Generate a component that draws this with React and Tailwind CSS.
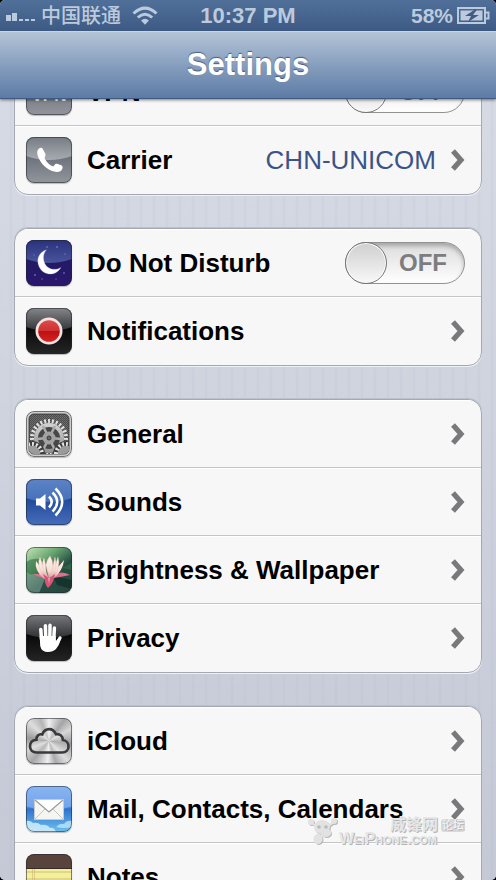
import React from "react";

const font = "font-['Liberation_Sans','Noto_Sans_CJK_SC',sans-serif]";

function Gloss({ id, top, bottom, topEnd, bottomEnd }) {
  return (
    <>
      <defs>
        <linearGradient id={id + "-a"} x1="0" y1="0" x2="0" y2="1">
          <stop offset="0" stopColor={top} />
          <stop offset="1" stopColor={topEnd} />
        </linearGradient>
        <linearGradient id={id + "-b"} x1="0" y1="0" x2="0" y2="1">
          <stop offset="0.4" stopColor={bottom} />
          <stop offset="1" stopColor={bottomEnd} />
        </linearGradient>
      </defs>
      <rect width="46" height="46" fill={`url(#${id}-b)`} />
      <path d="M0 0H46V19Q23 27 0 19Z" fill={`url(#${id}-a)`} />
    </>
  );
}

function Tile({ children, className = "" }) {
  return (
    <span className={`relative block size-[46px] shrink-0 overflow-hidden rounded-lg shadow-[0_1px_1px_rgba(0,0,0,0.25)] ${className}`}>
      <svg viewBox="0 0 46 46" className="block size-full" aria-hidden="true">
        {children}
        <rect x="0.5" y="0.5" width="45" height="45" rx="7.5" fill="none" stroke="#20242c" strokeOpacity="0.55" />
      </svg>
    </span>
  );
}

function VpnIcon() {
  return (
    <Tile>
      <Gloss id="vpn" top="#b4b7bc" topEnd="#898d94" bottom="#70757e" bottomEnd="#92959a" />
      <text x="23" y="32" textAnchor="middle" fontSize="17" fontWeight="bold" fill="#fff">VPN</text>
    </Tile>
  );
}

function PhoneIcon() {
  return (
    <Tile>
      <Gloss id="phone" top="#777c84" topEnd="#a7abb1" bottom="#6a707a" bottomEnd="#92969d" />
      <path d="M13 11.5C11 13 10.6 16 12.2 20C15 27 21 32.5 28 34.6C32 35.5 35.5 34.8 36.5 31.2C36.8 29.8 36.5 29 35.2 28.3L31 26.8C30 26.5 29.3 26.8 28.7 27.7L27.3 29.6C23.5 28 20.2 24.8 18.5 21.2L19.2 19.2C19.8 18.2 19.7 17.5 19.2 16.5L17.1 12.4C16.2 10.6 14.8 10.2 13 11.5Z" fill="#fff" />
    </Tile>
  );
}

function MoonIcon() {
  return (
    <Tile>
      <Gloss id="moon" top="#29317b" topEnd="#49559c" bottom="#211b63" bottomEnd="#2b176e" />
      <g fill="#8c96d3" opacity="0.6">
        <circle cx="21" cy="7" r="0.9" /><circle cx="31" cy="7" r="1" /><circle cx="39" cy="14" r="0.8" />
        <circle cx="8" cy="15" r="0.7" /><circle cx="9" cy="35" r="1" /><circle cx="16" cy="39" r="0.8" />
        <circle cx="38" cy="33" r="0.9" /><circle cx="30" cy="39" r="0.7" />
      </g>
      <path d="M20.5 9.8C12.5 12.5 9.8 20 13.2 27C17.4 35.6 29.5 37 35 27.5C28.6 31.2 21.5 29 18.8 23.4C16.6 18.7 17.2 13.5 20.5 9.8Z" fill="#fff" stroke="#a8aee0" strokeOpacity="0.5" strokeWidth="0.6" />
    </Tile>
  );
}

function NotificationsIcon() {
  return (
    <Tile>
      <Gloss id="notif" top="#85878a" topEnd="#303235" bottom="#080808" bottomEnd="#252525" />
      <defs>
        <linearGradient id="red" x1="0" y1="0" x2="0" y2="1">
          <stop offset="0" stopColor="#df4b4b" /><stop offset="0.5" stopColor="#ce3030" />
          <stop offset="0.52" stopColor="#bd1114" /><stop offset="1" stopColor="#d42222" />
        </linearGradient>
      </defs>
      <circle cx="23" cy="23" r="13.5" fill="#f5e3e3" />
      <circle cx="23" cy="23" r="10.8" fill="url(#red)" />
    </Tile>
  );
}

function Gear({ x, y, r, teeth, band }) {
  return (
    <g transform={`translate(${x} ${y})`} fill="none">
      <circle r={r} strokeWidth="4" pathLength={teeth * 2} strokeDasharray="1 1" stroke="#e2e2e2" />
      <circle r={r - 2 - band / 2} strokeWidth={band} stroke="url(#steel)" />
    </g>
  );
}

function GeneralIcon() {
  return (
    <Tile>
      <defs>
        <pattern id="mesh" width="2" height="2" patternUnits="userSpaceOnUse">
          <rect width="2" height="2" fill="#4c4c4c" /><rect width="1" height="1" fill="#727272" /><rect x="1" y="1" width="1" height="1" fill="#686868" />
        </pattern>
        <linearGradient id="steel" gradientUnits="userSpaceOnUse" x1="0" y1="-18" x2="0" y2="18">
          <stop offset="0" stopColor="#dadada" /><stop offset="1" stopColor="#8a8a8a" />
        </linearGradient>
        <clipPath id="gearbox"><rect x="3" y="3" width="40" height="40" rx="5" /></clipPath>
      </defs>
      <rect width="46" height="46" fill="#cccccc" />
      <rect x="3" y="3" width="40" height="40" rx="5" fill="url(#mesh)" stroke="#333" strokeWidth="0.8" />
      <g clipPath="url(#gearbox)">
        <circle cx="23" cy="27" r="13" fill="#474747" />
        <Gear x={23} y={27} r={17} teeth={27} band={4} />
        <g stroke="#aaaaaa" strokeWidth="2.6">
          <path d="M23 27L17 15M23 27L29 15M23 27L10 28M23 27L36 28M23 27L17 39M23 27L29 39" />
        </g>
        <circle cx="23" cy="27" r="6.5" fill="#a2a2a2" />
        <circle cx="23" cy="27" r="2" fill="#666" stroke="#3a3a3a" />
        <circle cx="6" cy="43" r="13" fill="#3e3e3e" /><circle cx="40" cy="43" r="13" fill="#3e3e3e" />
        <Gear x={6} y={43} r={10} teeth={16} band={4} />
        <Gear x={40} y={43} r={10} teeth={16} band={4} />
        <circle cx="6" cy="43" r="8" fill="#9b9b9b" /><circle cx="40" cy="43" r="8" fill="#9b9b9b" />
      </g>
    </Tile>
  );
}

function SoundsIcon() {
  return (
    <Tile>
      <Gloss id="sound" top="#5d83c5" topEnd="#4570ba" bottom="#1f489a" bottomEnd="#466db9" />
      <path d="M10 19.5H14L19.5 15V31L14 26.5H10Z" fill="#fff" />
      <g fill="none" stroke="#fff" strokeWidth="2.5">
        <path d="M23 17.5Q28.5 23 23 28.5" />
        <path d="M26.5 13.5Q36 23 26.5 32.5" />
        <path d="M29.5 9.5Q43 23 29.5 36.5" />
      </g>
    </Tile>
  );
}

function LotusIcon() {
  return (
    <Tile>
      <defs>
        <linearGradient id="pond" x1="0" y1="0" x2="0.8" y2="1">
          <stop offset="0" stopColor="#c6e6bb" /><stop offset="0.35" stopColor="#6ca872" />
          <stop offset="0.65" stopColor="#254f43" /><stop offset="1" stopColor="#28463f" />
        </linearGradient>
        <linearGradient id="petal" x1="0" y1="0" x2="0" y2="1">
          <stop offset="0" stopColor="#fff6ec" /><stop offset="0.65" stopColor="#f7ddd4" /><stop offset="1" stopColor="#e08a9b" />
        </linearGradient>
      </defs>
      <rect width="46" height="46" fill="url(#pond)" />
      <path d="M0 15Q10 8 24 16T46 15V23Q30 18 20 25T0 25Z" fill="#347244" opacity="0.6" />
      <path d="M0 29Q9 24 19 32L13 46H0Z" fill="#78968d" opacity="0.65" />
      <path d="M27 29L46 33V42L31 38Z" fill="#132e29" opacity="0.8" />
      <path d="M19 27L7 27Q12 30 20 31ZM27 28Q36 23 44 28Q35 30 27 31Z" fill="#db718b" />
      <path d="M22 30L10 14Q8 23 18 32ZM24 30L38 13Q37 24 27 32Z" fill="url(#petal)" />
      <path d="M21 31L14 10Q10 18 18 31ZM25 31L32 10Q35 19 28 31Z" fill="url(#petal)" stroke="#eab9b6" strokeWidth="0.4" />
      <path d="M23 31L18 11Q14 18 20 31ZM24 31L29 10Q32 20 26 31ZM23 32Q16 19 24 9Q30 19 25 32Z" fill="url(#petal)" stroke="#e6bdb6" strokeWidth="0.4" />
      <path d="M17 27L23 31L29 27Q28 36 22 41Q18 36 19 32Z" fill="#d95577" />
      <path d="M22 31L24 31L23 37Z" fill="#ef9cae" />
    </Tile>
  );
}

function HandIcon() {
  return (
    <Tile>
      <Gloss id="hand" top="#77797c" topEnd="#2d2f32" bottom="#070707" bottomEnd="#242424" />
      <g fill="none" stroke="#fff" strokeLinecap="round">
        <path d="M14.8 14.5L15.5 24M19.4 10.8L19.8 24M24 10.2L23.8 24M28.4 13L27.8 24" strokeWidth="3.5" />
        <path d="M34 23L30.5 29" strokeWidth="3.4" />
      </g>
      <path d="M13.7 21H29.6L30 26L32.2 23.5L34.5 25.5Q32.8 31 30 34Q27 37 22 37Q15.5 37 14.2 31Z" fill="#fff" />
    </Tile>
  );
}

function CloudIcon() {
  return (
    <Tile className="bg-[conic-gradient(#eee,#a5a5a5_10%,#d8d8d8_17%,#999_27%,#ddd_38%,#aaa_45%,#eee_51%,#a6a6a6_61%,#d8d8d8_69%,#999_77%,#ddd_87%,#b4b4b4_94%,#eee)]">
      <path d="M10.5 34.5H36C40 34.5 42.5 32 42.5 28.5C42.5 25 40 22.3 36.8 22C36.8 18 33.5 15.5 30 16.3C28 12.2 24.7 10.5 21 11.5C18.5 12.2 17 14 16.3 16.5C12.7 15.5 10 18.5 10.4 21.8C6.5 22.2 4 24.7 4 28.3C4 32 6.5 34.5 10.5 34.5Z" fill="#fff" fillOpacity="0.2" stroke="#383a3d" strokeWidth="2.6" />
    </Tile>
  );
}

function MailIcon() {
  return (
    <Tile>
      <defs>
        <linearGradient id="sky" x1="0" y1="0" x2="0" y2="1">
          <stop offset="0" stopColor="#7fb0f0" /><stop offset="0.45" stopColor="#5a91df" />
          <stop offset="0.5" stopColor="#2e72cd" /><stop offset="1" stopColor="#6cc2ef" />
        </linearGradient>
      </defs>
      <rect width="46" height="46" fill="url(#sky)" />
      <path d="M0 0H46V20Q23 29 0 20Z" fill="#8fbaf3" opacity="0.5" />
      <path d="M0 35Q4 34 7 37Q12 36 15 39Q21 38 24 42Q28 41 30 46H0Z" fill="#d9f1fb" opacity="0.8" />
      <path d="M30 41Q34 37 38 38Q41 34 46 35V41Q38 43 30 41Z" fill="#d9f1fb" opacity="0.65" />
      <rect x="8.5" y="13.5" width="29" height="20" fill="#f5f5f2" stroke="#c7cbd0" />
      <path d="M9 33L19 23M37 33L27 23" stroke="#b9bbbb" strokeWidth="0.8" />
      <path d="M9 14L23 26L37 14" fill="#fff" stroke="#999b9c" strokeWidth="1.2" />
    </Tile>
  );
}

function NotesIcon() {
  return (
    <Tile>
      <rect width="46" height="46" fill="#f5ee9a" />
      <rect width="46" height="14" fill="#59443d" />
      <path d="M0 14.5H46" stroke="#372a27" />
      <path d="M0 18H46M0 25H46M0 32H46M0 39H46" stroke="#c7c37b" />
      <path d="M6.5 15V46M8.5 15V46" stroke="#cdb670" strokeWidth="0.6" />
    </Tile>
  );
}

function Chevron() {
  return (
    <svg viewBox="0 0 14 22" className="h-[22px] w-[14px] shrink-0" aria-hidden="true">
      <path d="M2 2L10 11L2 20" fill="none" stroke="#79797b" strokeWidth="5.2" />
    </svg>
  );
}

const rowStyle = "flex h-[68px] items-center gap-[15px] border-b border-[#c4c5c8] pl-[11px] pr-4 text-[26px] leading-8 font-bold text-black shadow-[inset_0_1px_0_#fff] last:border-b-0";

function LinkRow({ icon, label, value }) {
  return (
    <a href="#" className={rowStyle}>
      {icon}
      <span className="flex-1 whitespace-nowrap">{label}</span>
      {value && <span className="font-normal text-[#3b5487]">{value}</span>}
      <Chevron />
    </a>
  );
}

function SwitchRow({ icon, label }) {
  return (
    <label className={rowStyle}>
      {icon}
      <span className="flex-1">{label}</span>
      <span className="relative flex h-[42px] w-[120px] shrink-0 items-center justify-end rounded-full border border-[#929295] bg-linear-to-b from-[#dcdcdc] to-white pr-[17px] shadow-[inset_0_3px_4px_rgba(0,0,0,0.25)]">
        <input type="checkbox" role="switch" className="absolute -top-px -left-px size-[42px] appearance-none rounded-full border border-[#77777a] bg-linear-to-b from-[#cfcfcf] to-[#f8f8f8] shadow-[inset_0_0_0_1px_#fafafa]" />
        <span className="text-2xl text-[#7d7d7f]">OFF</span>
      </span>
    </label>
  );
}

function Group({ children }) {
  return (
    <section className="overflow-hidden rounded-[14px] border border-[#a4a8b1] bg-[#f7f7f7] shadow-[0_1px_0_#edf0f5,0_-1px_0_#bcc1cb]">
      {children}
    </section>
  );
}

function StatusBar() {
  return (
    <div className="grid h-[31px] grid-cols-[1fr_auto_1fr] items-center bg-linear-to-b from-[#50709a] to-[#3d5a83] px-[6px] text-[#bccadd]">
      <div className="flex items-center">
        <svg viewBox="0 0 30 12" className="h-3 w-[30px]" fill="#bccadd" aria-hidden="true">
          <path d="M0 5H5V11H0ZM6 3H11V11H6ZM13 9H17V11H13ZM19 9H23V11H19ZM25 9H29V11H25Z" />
        </svg>
        <span className="ml-[5px] text-xl leading-7 font-medium">中国联通</span>
        <svg viewBox="0 0 26 20" className="ml-[11px] h-5 w-[26px]" fill="none" stroke="#bccadd" strokeWidth="3" aria-hidden="true">
          <path d="M1.5 7.5Q13 -3.2 24.5 7.5M5.8 11.5Q13 5 20.2 11.5" />
          <path d="M9 14.5Q13 11 17 14.5L13 18.8Z" fill="#bccadd" stroke="none" />
        </svg>
      </div>
      <span className="text-[22px] leading-7 font-bold">10:37 PM</span>
      <div className="flex items-center justify-end gap-1">
        <span className="text-[21px] leading-7 font-bold">58%</span>
        <svg viewBox="0 0 33 17" className="h-[17px] w-[33px]" aria-hidden="true">
          <path d="M1 1H28V16H1ZM28 5.5H31.5V11.5H28" fill="none" stroke="#bccadd" strokeWidth="2" />
          <rect x="3.5" y="3.5" width="22" height="10" fill="#bccadd" />
          <path d="M18 2.5L8 9H14L11 15L22 8H16L20 2.5Z" fill="#405c84" />
        </svg>
      </div>
    </div>
  );
}

function Watermark() {
  return (
    <div className="pointer-events-none absolute right-[31px] bottom-[34px] flex items-end text-[#e6e6e7] [text-shadow:1px_1px_0_#b4b4b6]" aria-hidden="true">
      <svg viewBox="0 0 32 28" className="h-7 w-8 drop-shadow-[1px_1px_0_#b8b8ba]">
        <g fill="#e2e2e3">
          <ellipse cx="15" cy="9" rx="8" ry="7" /><circle cx="4" cy="4" r="3" /><circle cx="27" cy="3" r="3" />
          <ellipse cx="11" cy="21" rx="4.5" ry="5" /><path d="M5 5L12 10M27 4L20 9" stroke="#e2e2e3" strokeWidth="2" />
          <ellipse cx="19" cy="15" rx="5" ry="4" />
        </g>
        <circle cx="12" cy="9" r="1.8" fill="#bbb" /><circle cx="19" cy="9" r="1.8" fill="#bbb" />
      </svg>
      <div className="flex flex-col items-end">
        <div className="flex items-center gap-[3px] leading-[14px]">
          <span className="text-base leading-[14px] font-bold">威锋网</span>
          <span className="rounded-[3px] bg-[#d8d8da] px-px text-[11px] leading-[13px] text-[#f6f6f6]">论坛</span>
        </div>
        <span className="mr-7 text-base leading-[14px] font-bold [font-variant:small-caps]">WeiPhone.com</span>
      </div>
    </div>
  );
}

export default function App() {
  return (
    <div className={`h-screen overflow-hidden bg-black ${font}`}>
      <div className="relative flex h-full flex-col overflow-hidden rounded-[5px] bg-[#d0d4df]">
        <header className="relative z-10 shrink-0 shadow-[0_1px_3px_rgba(0,0,0,0.5)]">
          <StatusBar />
          <div className="flex h-[68px] items-center justify-center border-t border-b border-t-[#c8d5e4] border-b-[#405b83] bg-linear-to-b from-[#b4c4d7] to-[#5c7ba5]">
            <h1 className="text-[31px] leading-9 font-bold text-white [text-shadow:0_-1px_1px_rgba(30,50,80,0.65)]">Settings</h1>
          </div>
        </header>
        <main className="min-h-0 flex-1 overflow-hidden bg-linear-to-b from-[#d6dae4] to-[#c5c9d6]">
          <div className="-mt-[42px] flex flex-col gap-[33px] bg-[repeating-linear-gradient(90deg,transparent_0px,transparent_9px,rgba(160,170,195,0.12)_11px,transparent_13px)] px-[14px]">
            <Group>
              <SwitchRow icon={<VpnIcon />} label="VPN" />
              <LinkRow icon={<PhoneIcon />} label="Carrier" value="CHN-UNICOM" />
            </Group>
            <Group>
              <SwitchRow icon={<MoonIcon />} label="Do Not Disturb" />
              <LinkRow icon={<NotificationsIcon />} label="Notifications" />
            </Group>
            <Group>
              <LinkRow icon={<GeneralIcon />} label="General" />
              <LinkRow icon={<SoundsIcon />} label="Sounds" />
              <LinkRow icon={<LotusIcon />} label="Brightness & Wallpaper" />
              <LinkRow icon={<HandIcon />} label="Privacy" />
            </Group>
            <Group>
              <LinkRow icon={<CloudIcon />} label="iCloud" />
              <LinkRow icon={<MailIcon />} label="Mail, Contacts, Calendars" />
              <LinkRow icon={<NotesIcon />} label="Notes" />
            </Group>
          </div>
        </main>
        <Watermark />
      </div>
    </div>
  );
}
